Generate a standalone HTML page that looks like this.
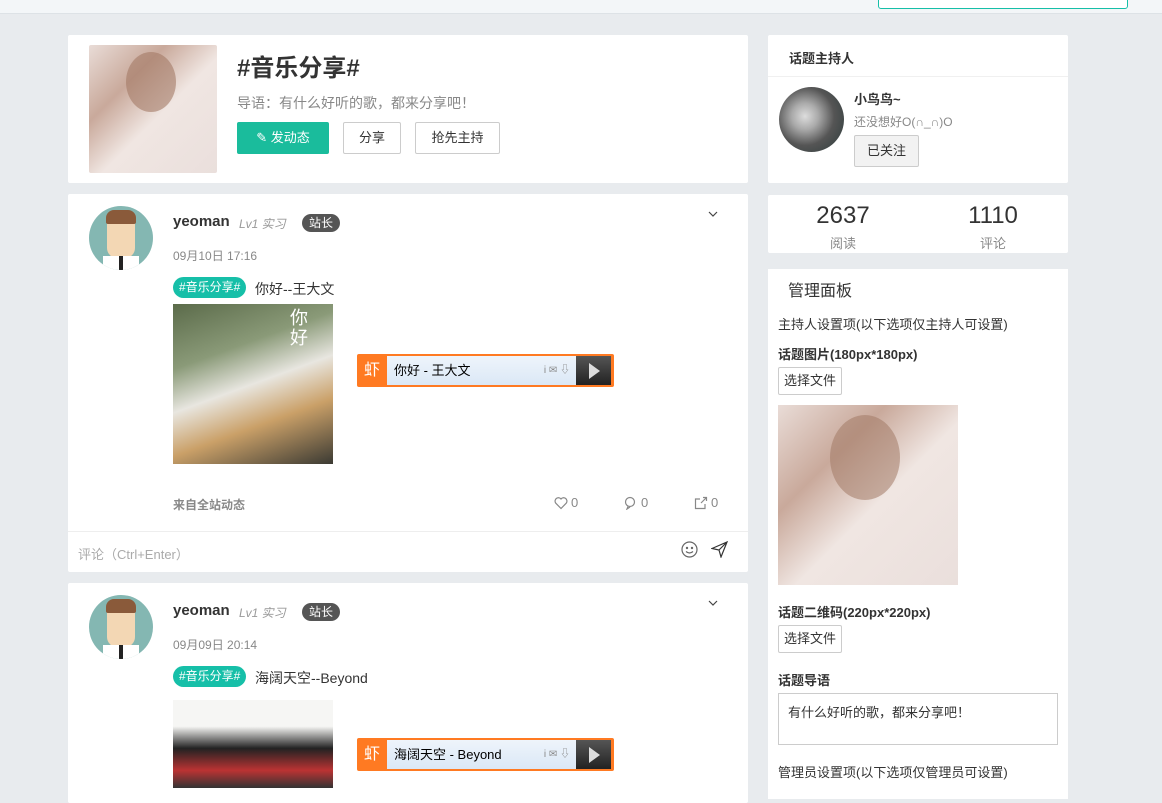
<!DOCTYPE html>
<html><head><meta charset="utf-8"><style>
*{box-sizing:border-box;margin:0;padding:0}
body{width:1162px;height:788px;overflow:hidden;background:#e8ebee;font-family:"Liberation Sans","Noto Sans CJK SC",sans-serif;color:#333;position:relative}
.abs{position:absolute}
.card{position:absolute;background:#fff;border-radius:2px}
.btn{position:absolute;border:1px solid #ccc;background:#fff;font-size:13px;text-align:center;border-radius:2px}
.tag{position:absolute;background:#16bfa8;color:#fff;font-size:12px;border-radius:11px;height:21px;line-height:21px;padding:0 6px}
.gray{color:#888}
.xiami{position:absolute;width:257px;height:33px;background:#ff7a22;border-radius:2px}
.xiami .l{position:absolute;left:0;top:0;width:30px;height:33px;color:#fff;font-size:16px;line-height:33px;text-align:center}
.xiami .m{position:absolute;left:30px;top:2px;width:189px;height:29px;background:linear-gradient(#eef4fb,#dbe8f6);font-size:13px;line-height:29px;padding-left:7px;color:#000}
.xiami .r{position:absolute;left:219px;top:2px;width:35px;height:29px;background:linear-gradient(#555,#222)}
.xiami .r:after{content:"";position:absolute;left:13px;top:7px;border-left:11px solid #ddd;border-top:8px solid transparent;border-bottom:8px solid transparent}
.avatar{position:absolute;width:64px;height:64px;border-radius:50%;background:#84b7b2;overflow:hidden}
svg.i{position:absolute;fill:none;stroke:#888;stroke-width:1.2}
</style></head><body>
<div class="abs" style="left:0;top:0;width:1162px;height:14px;background:#f3f6f8;border-bottom:1px solid #dde2e6"></div>
<div class="abs" style="left:878px;top:-4px;width:250px;height:13px;border:1px solid #16bfa8;border-radius:3px;background:#fff"></div>

<div class="card" style="left:68px;top:35px;width:680px;height:148px"></div>
<div class="abs" style="left:89px;top:45px;width:128px;height:128px;background:linear-gradient(135deg,#e9dcd7 0%,#c9a99b 30%,#f0e6e2 55%,#eadfdc 100%);border-radius:2px"></div>
<div class="abs" style="left:126px;top:52px;width:50px;height:60px;border-radius:50%;background:#a37a66;opacity:.6"></div>
<div class="abs" style="left:237px;top:48px;font-size:24px;font-weight:bold;color:#333">#音乐分享#</div>
<div class="abs" style="left:237px;top:93px;font-size:14px;color:#888">导语：有什么好听的歌，都来分享吧！</div>
<div class="btn" style="left:237px;top:122px;width:92px;height:32px;background:#1abc9c;border-color:#1abc9c;color:#fff;line-height:30px">✎ 发动态</div>
<div class="btn" style="left:343px;top:122px;width:58px;height:32px;line-height:30px">分享</div>
<div class="btn" style="left:415px;top:122px;width:85px;height:32px;line-height:30px">抢先主持</div>

<!-- post 1 -->
<div class="card" style="left:68px;top:194px;width:680px;height:378px"></div>
<div class="avatar" style="left:89px;top:206px"><div class="abs" style="left:18px;top:8px;width:28px;height:44px;background:#f3d7b4;border-radius:10px"></div><div class="abs" style="left:17px;top:4px;width:30px;height:14px;background:#8a5a3a;border-radius:8px 8px 2px 2px"></div><div class="abs" style="left:14px;top:50px;width:36px;height:14px;background:#fff"></div><div class="abs" style="left:30px;top:50px;width:4px;height:14px;background:#222"></div></div>
<div class="abs" style="left:173px;top:213px;font-size:15px;font-weight:bold">yeoman</div>
<div class="abs" style="left:239px;top:215px;font-size:12px;color:#999;font-style:italic">Lv1 实习</div>
<div class="abs" style="left:302px;top:214px;width:38px;height:18px;background:#555;color:#fff;border-radius:9px;font-size:12px;text-align:center;line-height:18px">站长</div>
<div class="abs gray" style="left:173px;top:247px;font-size:12px">09月10日 17:16</div>
<div class="tag" style="left:173px;top:277px">#音乐分享#</div>
<div class="abs" style="left:255px;top:279px;font-size:14px">你好--王大文</div>
<svg class="i" style="left:708px;top:210px;stroke:#444" width="10" height="8"><path d="M1 2l4 4 4-4"/></svg>
<div class="abs" style="left:173px;top:304px;width:160px;height:160px;background:linear-gradient(160deg,#5b6b4a 0%,#8a9a78 30%,#e8e6e0 50%,#caa068 70%,#3b3a33 100%)"></div>
<div class="abs" style="left:290px;top:308px;color:#fff;font-size:18px;line-height:20px">你<br>好</div>
<div class="xiami" style="left:357px;top:354px"><div class="l">虾</div><div class="m">你好 - 王大文<span style="position:absolute;right:6px;color:#888;font-size:10px">i ✉ ⇩</span></div><div class="r"></div></div>
<div class="abs" style="left:173px;top:496px;font-size:12px;color:#888;font-weight:bold">来自全站动态</div>
<svg class="i" style="left:554px;top:496px" width="14" height="14"><path d="M7 12.5L1.8 7.2A3 3 0 0 1 7 3a3 3 0 0 1 5.2 4.2z"/></svg>
<div class="abs gray" style="left:571px;top:495px;font-size:13px">0</div>
<svg class="i" style="left:624px;top:496px" width="14" height="14"><circle cx="6" cy="6" r="4.5"/><path d="M4 10.5l-1 2.5 3-2"/></svg>
<div class="abs gray" style="left:641px;top:495px;font-size:13px">0</div>
<svg class="i" style="left:694px;top:496px" width="14" height="14"><path d="M6 3H1.5v9.5H11V8M7 7l5.5-5.5M9 1.5h3.5V5"/></svg>
<div class="abs gray" style="left:711px;top:495px;font-size:13px">0</div>
<div class="abs" style="left:68px;top:531px;width:680px;height:1px;background:#eee"></div>
<div class="abs" style="left:78px;top:544px;font-size:13px;color:#aaa">评论（Ctrl+Enter）</div>
<svg class="i" style="left:681px;top:541px;stroke:#666" width="17" height="17"><circle cx="8.5" cy="8.5" r="7.5"/><circle cx="6" cy="7" r=".6"/><circle cx="11" cy="7" r=".6"/><path d="M5 10.5q3.5 3 7 0"/></svg>
<svg class="i" style="left:711px;top:541px;stroke:#333" width="17" height="17"><path d="M1 7.5L16 1 10 16 8 9zM8 9l8-8"/></svg>

<!-- post 2 -->
<div class="card" style="left:68px;top:583px;width:680px;height:220px"></div>
<div class="avatar" style="left:89px;top:595px"><div class="abs" style="left:18px;top:8px;width:28px;height:44px;background:#f3d7b4;border-radius:10px"></div><div class="abs" style="left:17px;top:4px;width:30px;height:14px;background:#8a5a3a;border-radius:8px 8px 2px 2px"></div><div class="abs" style="left:14px;top:50px;width:36px;height:14px;background:#fff"></div><div class="abs" style="left:30px;top:50px;width:4px;height:14px;background:#222"></div></div>
<div class="abs" style="left:173px;top:602px;font-size:15px;font-weight:bold">yeoman</div>
<div class="abs" style="left:239px;top:604px;font-size:12px;color:#999;font-style:italic">Lv1 实习</div>
<div class="abs" style="left:302px;top:603px;width:38px;height:18px;background:#555;color:#fff;border-radius:9px;font-size:12px;text-align:center;line-height:18px">站长</div>
<div class="abs gray" style="left:173px;top:636px;font-size:12px">09月09日 20:14</div>
<div class="tag" style="left:173px;top:666px">#音乐分享#</div>
<div class="abs" style="left:255px;top:668px;font-size:14px">海阔天空--Beyond</div>
<svg class="i" style="left:708px;top:599px;stroke:#444" width="10" height="8"><path d="M1 2l4 4 4-4"/></svg>
<div class="abs" style="left:173px;top:700px;width:160px;height:88px;background:linear-gradient(#f6f6f4 0%,#f6f6f4 30%,#222 55%,#b33 80%,#333 100%)"></div>
<div class="xiami" style="left:357px;top:738px"><div class="l">虾</div><div class="m">海阔天空 - Beyond<span style="position:absolute;right:6px;color:#888;font-size:10px">i ✉ ⇩</span></div><div class="r"></div></div>

<!-- right: host -->
<div class="card" style="left:768px;top:35px;width:300px;height:148px"></div>
<div class="abs" style="left:789px;top:48px;font-size:13px;font-weight:bold">话题主持人</div>
<div class="abs" style="left:768px;top:76px;width:300px;height:1px;background:#f0f0f0"></div>
<div class="abs" style="left:779px;top:87px;width:65px;height:65px;border-radius:50%;background:radial-gradient(circle at 40% 45%,#ddd 0%,#aaa 25%,#555 55%,#2a3a3a 100%)"></div>
<div class="abs" style="left:854px;top:89px;font-size:13px;font-weight:bold">小鸟鸟~</div>
<div class="abs gray" style="left:854px;top:113px;font-size:12px">还没想好O(∩_∩)O</div>
<div class="btn" style="left:854px;top:135px;width:65px;height:32px;line-height:30px;background:#f2f2f2">已关注</div>

<div class="card" style="left:768px;top:195px;width:300px;height:58px"></div>
<div class="abs" style="left:768px;top:202px;width:150px;text-align:center;font-size:24px">2637</div>
<div class="abs gray" style="left:768px;top:233px;width:150px;text-align:center;font-size:13px">阅读</div>
<div class="abs" style="left:918px;top:202px;width:150px;text-align:center;font-size:24px">1110</div>
<div class="abs gray" style="left:918px;top:233px;width:150px;text-align:center;font-size:13px">评论</div>

<div class="abs" style="left:768px;top:269px;width:300px;height:530px;background:#fff"></div>
<div class="abs" style="left:788px;top:277px;font-size:16px">管理面板</div>
<div class="abs" style="left:778px;top:314px;font-size:13px">主持人设置项(以下选项仅主持人可设置)</div>
<div class="abs" style="left:778px;top:344px;font-size:13px;font-weight:bold">话题图片(180px*180px)</div>
<div class="btn" style="left:778px;top:367px;width:64px;height:28px;line-height:26px">选择文件</div>
<div class="abs" style="left:778px;top:405px;width:180px;height:180px;background:linear-gradient(135deg,#e9dcd7 0%,#c9a99b 30%,#f0e6e2 55%,#eadfdc 100%)"></div>
<div class="abs" style="left:830px;top:415px;width:70px;height:85px;border-radius:50%;background:#a37a66;opacity:.55"></div>
<div class="abs" style="left:778px;top:602px;font-size:13px;font-weight:bold">话题二维码(220px*220px)</div>
<div class="btn" style="left:778px;top:625px;width:64px;height:28px;line-height:26px">选择文件</div>
<div class="abs" style="left:778px;top:670px;font-size:13px;font-weight:bold">话题导语</div>
<div class="abs" style="left:778px;top:693px;width:280px;height:52px;border:1px solid #ccc;font-size:13px;padding:8px 9px">有什么好听的歌，都来分享吧！</div>
<div class="abs" style="left:778px;top:762px;font-size:13px">管理员设置项(以下选项仅管理员可设置)</div>
</body></html>
